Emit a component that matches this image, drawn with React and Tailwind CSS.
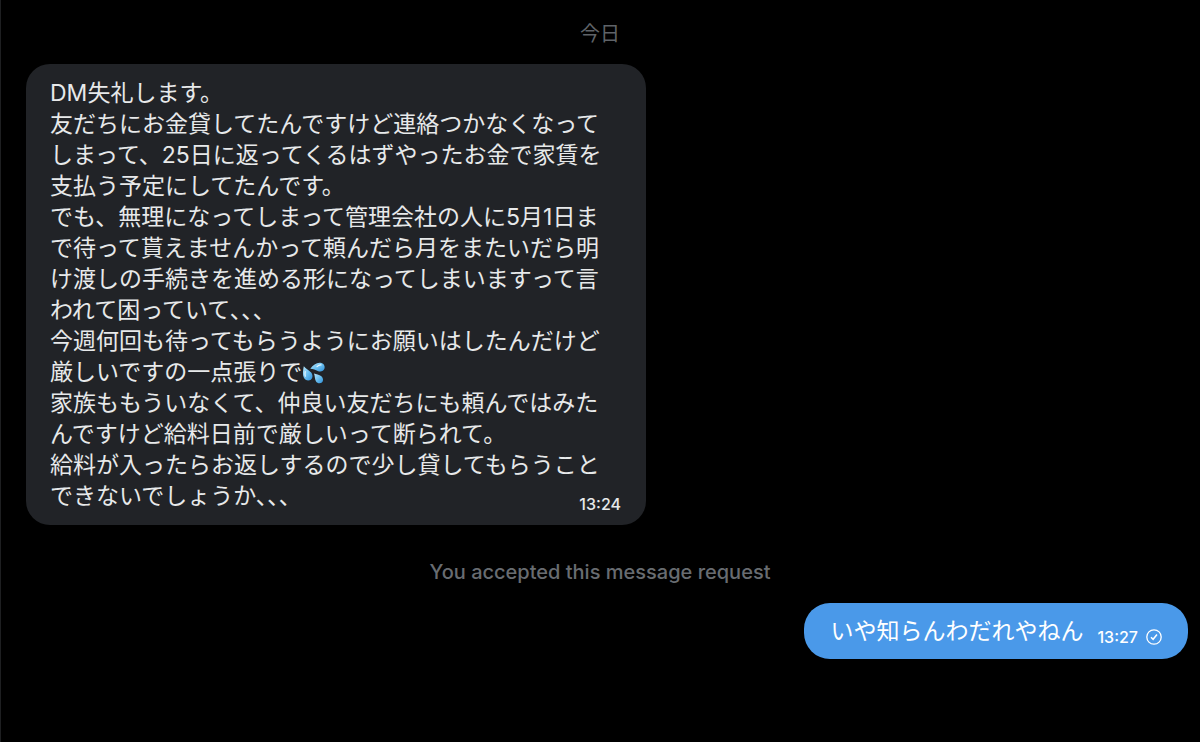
const receivedText = `DM失礼します。
友だちにお金貸してたんですけど連絡つかなくなってしまって、25日に返ってくるはずやったお金で家賃を支払う予定にしてたんです。
でも、無理になってしまって管理会社の人に5月1日まで待って貰えませんかって頼んだら月をまたいだら明け渡しの手続きを進める形になってしまいますって言われて困っていて､､､
今週何回も待ってもらうようにお願いはしたんだけど厳しいですの一点張りで`;

const receivedTextEnd = `
家族ももういなくて、仲良い友だちにも頼んではみたんですけど給料日前で厳しいって断られて。
給料が入ったらお返しするので少し貸してもらうことできないでしょうか､､､`;

function SweatDroplets() {
  return (
    <svg
      viewBox="0 0 24 24"
      role="img"
      aria-label="💦"
      className="inline-block size-6 align-[-5px]"
    >
      <defs>
        <linearGradient id="drop" x1="0" y1="0" x2="1" y2="1">
          <stop offset="0" stopColor="#b9e6fb" />
          <stop offset="0.5" stopColor="#6cc0f0" />
          <stop offset="1" stopColor="#2f8fd8" />
        </linearGradient>
      </defs>
      <path d="M8.3 7.800C11 4 14.600 1.400 18.400 1.800C21.600 2.100 23.300 5 22.500 7.600C21.600 10.400 18.400 11.200 15.800 10C13.600 9 11.200 8 8.300 7.800Z" fill="url(#drop)" />
      <path d="M1.800 5.200C1 9.200 0.400 13.600 1.800 16.600C3 19.400 6.400 20.400 8.800 18.800C11 17.200 11 14 9.200 11.600C7 9.200 4 7.800 1.800 5.200Z" fill="url(#drop)" />
      <path d="M12 12.400C14 13.400 17.200 13.200 19.400 15.200C21.400 17 21.600 20 19.900 21.500C18 23 15.200 22.400 13.900 20.200C12.700 17.800 13 15 12 12.400Z" fill="url(#drop)" />
      <path d="M15 5.600C16.300 4.300 17.600 3.700 19 3.900M3.200 10.600C2.800 12.600 2.800 14 3.300 15.200" fill="none" stroke="#e8f8ff" strokeWidth="1.200" strokeLinecap="round" />
    </svg>
  );
}

function SentIcon() {
  return (
    <svg viewBox="0 0 16 16" role="img" aria-label="Sent" className="size-4" fill="none" stroke="currentColor">
      <circle cx="8" cy="8" r="7.200" strokeWidth="1.300" />
      <path d="M5 8.300L7.100 10.300L11 5.500" strokeWidth="1.500" />
    </svg>
  );
}

export default function App() {
  return (
    <main
      lang="ja"
      className="flex min-h-screen flex-col border-l border-[#1e1f21] bg-black pt-[18px] pr-3 pb-20 pl-[25px] font-['Inter','Noto_Sans_CJK_JP',sans-serif] text-[23px] leading-[31px] text-[#e7e9ea]"
    >
      <h2 className="pr-3.5 text-center text-[20px] leading-8 text-[#5f6368]">今日</h2>

      <article className="mt-3.5 w-[620px] max-w-full rounded-3xl bg-[#212327] pt-3.5 pr-[25px] pb-[13px] pl-6">
        <p className="whitespace-pre-line">
          {receivedText}
          <SweatDroplets />
          {receivedTextEnd}
          <time className="float-right mt-[15px] text-base leading-4 font-medium">13:24</time>
        </p>
      </article>

      <p className="mt-[31px] pr-3.5 text-center text-[20px] leading-8 font-medium text-[#686c71]">
        You accepted this message request
      </p>

      <article className="mt-[15px] flex items-end gap-3.5 self-end rounded-[26px] bg-[#4a99e9] px-[26px] py-3 text-white">
        <p className="leading-8">いや知らんわだれやねん</p>
        <div className="flex items-center gap-2 text-base leading-5 font-medium">
          <time>13:27</time>
          <SentIcon />
        </div>
      </article>
    </main>
  );
}
